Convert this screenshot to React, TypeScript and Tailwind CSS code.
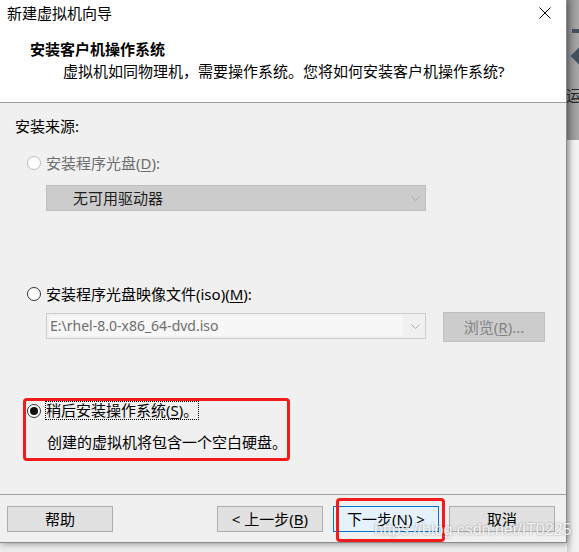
import React from "react";

function Radio({ checked = false, disabled = false }: { checked?: boolean; disabled?: boolean }) {
  return (
    <span
      className={`flex h-[14px] w-[14px] shrink-0 items-center justify-center rounded-full border bg-white ${
        disabled ? "border-[#bcbcbc]" : "border-[#333333]"
      }`}
    >
      {checked && <span className="h-2 w-2 rounded-full bg-[#111]" />}
    </span>
  );
}

function Chevron({ color }: { color: string }) {
  return (
    <svg width="9" height="5" viewBox="0 0 9 5">
      <polyline points="0.5,0.5 4.5,4.5 8.5,0.5" fill="none" stroke={color} strokeWidth="1" />
    </svg>
  );
}

function Btn({ children, primary = false }: { children: React.ReactNode; primary?: boolean }) {
  return (
    <button
      className={`flex h-[26px] w-[106px] items-center justify-center whitespace-nowrap border text-[15px] leading-5 text-black ${
        primary ? "border-[#0078d7] bg-[#e5f1fb]" : "border-[#adadad] bg-[#e1e1e1]"
      }`}
    >
      {children}
    </button>
  );
}

export default function App() {
  return (
    <div className="relative flex h-[552px] w-[579px] items-start overflow-hidden bg-[#ececec] font-['Noto_Sans','Noto_Sans_CJK_SC',sans-serif] text-[15px] leading-5 text-black">
      {/* wizard window */}
      <div className="relative z-10 flex h-[543px] w-[567px] shrink-0 flex-col border-r border-b border-[#8a8a8a] bg-[#f0f0f0] shadow-[1px_1px_6px_rgba(0,0,0,0.35)]">
        {/* header */}
        <div className="h-[103px] shrink-0 border-b border-[#a0a0a0] bg-white">
          <div className="flex h-[26px] items-center justify-between pl-[7px] pr-[15px]">
            <span>新建虚拟机向导</span>
            <svg width="12" height="12" viewBox="0 0 12 12" className="-mt-px">
              <path d="M0.5 0.5 L11.5 11.5 M11.5 0.5 L0.5 11.5" stroke="#000" strokeWidth="1" />
            </svg>
          </div>
          <div className="mt-[13px] pl-[30px] font-bold">安装客户机操作系统</div>
          <div className="mt-[2px] whitespace-nowrap pl-[63px]">虚拟机如同物理机，需要操作系统。您将如何安装客户机操作系统?</div>
        </div>

        {/* body */}
        <div className="flex h-[392px] shrink-0 flex-col border-b border-[#a0a0a0] pt-[13px]">
          <div className="pl-[15px]">安装来源:</div>

          <div className="mt-[17px] flex items-center gap-[5px] pl-[27px] text-[#6d6d6d]">
            <Radio disabled />
            <span>
              安装程序光盘(<u className="underline-offset-2">D</u>):
            </span>
          </div>
          <div className="ml-[46px] mt-[12px] flex h-[26px] w-[380px] items-center border border-[#bfbfbf] bg-[#cccccc] pl-[26px] pr-[5px]">
            <span className="text-[#1e1e1e]">无可用驱动器</span>
            <span className="ml-auto flex">
              <Chevron color="#a8a8a8" />
            </span>
          </div>

          <div className="mt-[73px] flex items-center gap-[5px] pl-[27px]">
            <Radio />
            <span>
              安装程序光盘映像文件(iso)(<u className="underline-offset-2">M</u>):
            </span>
          </div>
          <div className="mt-[8px] flex items-start gap-[17px] pl-[46px]">
            <div className="mt-px flex h-[26px] w-[380px] items-center border border-[#cccccc] bg-[#f0f0f0] pl-[2px] pr-[5px]">
              <div className="flex h-[20px] w-[354px] items-center bg-[#f7f7f7] pl-px text-[14px] text-[#6d6d6d]">
                E:\rhel-8.0-x86_64-dvd.iso
              </div>
              <span className="ml-auto flex">
                <Chevron color="#a8a8a8" />
              </span>
            </div>
            <div className="flex h-[30px] w-[102px] items-center justify-center border border-[#bfbfbf] bg-[#cccccc] text-[#838383]">
              浏览(<u className="underline-offset-2">R</u>)...
            </div>
          </div>

          <div className="ml-[23px] mt-[56px] h-[63px] w-[267px] rounded-[4px] border-[3px] border-[#f21b1b]">
            <div className="flex h-[19px] items-center gap-1 pl-px">
              <Radio checked />
              <span className="whitespace-nowrap border border-dotted border-black leading-[17px]">
                稍后安装操作系统(<u className="underline-offset-2">S</u>)。
              </span>
            </div>
            <div className="mt-[12px] whitespace-nowrap pl-[21px]">创建的虚拟机将包含一个空白硬盘。</div>
          </div>
        </div>

        {/* footer */}
        <div className="flex h-[47px] items-start pl-[7px] pr-[11px] pt-[11px]">
          <Btn>帮助</Btn>
          <div className="ml-auto flex gap-[10px]">
            <Btn>
              &lt; 上一步(<u className="underline-offset-2">B</u>)
            </Btn>
            <div className="relative">
              <Btn primary>
                下一步(<u className="underline-offset-2">N</u>) &gt;
              </Btn>
              <div className="absolute left-[3px] top-[-8px] h-[44px] w-[109px] rounded-[4px] border-[3px] border-[#f21b1b]" />
            </div>
            <Btn>取消</Btn>
          </div>
        </div>
      </div>

      {/* desktop behind */}
      <div className="flex h-full w-[12px] shrink-0 flex-col">
        <div className="relative h-[140px] overflow-hidden bg-gradient-to-r from-[#858585] to-[#a9a9a9]">
          <div className="absolute left-[5px] top-[29px] h-[4px] w-[8px] bg-[#44505c]" />
          <div className="absolute left-[6px] top-[50px] h-[12px] w-[12px] rotate-45 bg-[#44505c]" />
          <span className="absolute left-[-1px] top-[85px] text-[15px] leading-5 text-[#222]">运</span>
        </div>
        <div className="flex-1 bg-gradient-to-r from-[#cfcfcf] via-[#ededed] to-[#f4f4f4]" />
      </div>

      {/* watermark */}
      <div className="pointer-events-none absolute left-[374px] top-[519px] z-20 font-['Liberation_Sans',Arial,sans-serif] text-[16px] leading-[22px] text-white/90 [text-shadow:0_0_2px_rgba(0,0,0,0.45)]">
        https://blog.csdn.net/IT0225
      </div>
    </div>
  );
}
